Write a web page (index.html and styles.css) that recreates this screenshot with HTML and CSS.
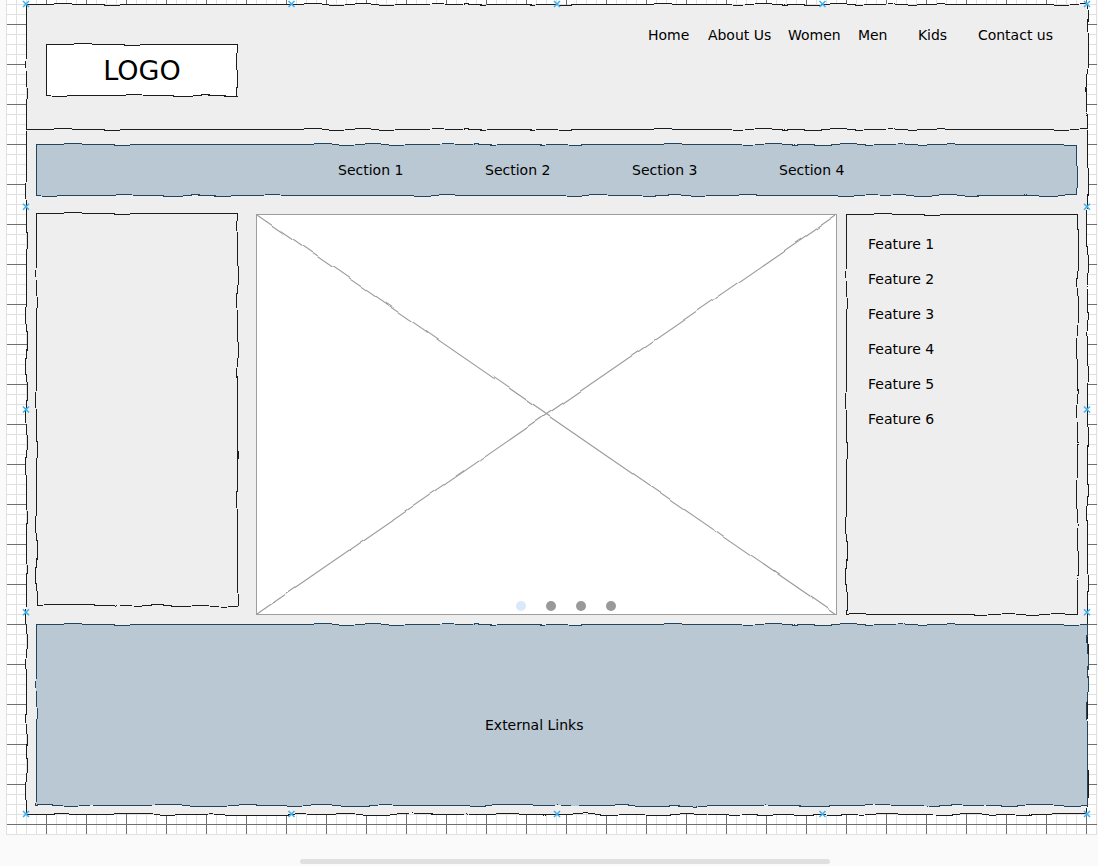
FILE: index.html
```html
<!DOCTYPE html>
<html>
<head>
<meta charset="utf-8">
<title>Wireframe</title>
<link rel="stylesheet" href="styles.css">
</head>
<body>
<svg class="defs" aria-hidden="true">
  <filter id="rough" x="-20%" y="-20%" width="140%" height="140%">
    <feTurbulence type="fractalNoise" baseFrequency="0.04" numOctaves="1" seed="7" result="noise"/>
    <feDisplacementMap in="SourceGraphic" in2="noise" scale="6" xChannelSelector="R" yChannelSelector="G" result="moved"/>
    <feGaussianBlur in="moved" stdDeviation="0.35"/>
  </filter>
  <filter id="rough-soft" x="-5%" y="-5%" width="110%" height="110%">
    <feTurbulence type="fractalNoise" baseFrequency="0.03" numOctaves="1" seed="3" result="noise"/>
    <feDisplacementMap in="SourceGraphic" in2="noise" scale="5" xChannelSelector="R" yChannelSelector="G" result="moved"/>
    <feGaussianBlur in="moved" stdDeviation="0.3"/>
  </filter>
</svg>
<div class="canvas">
  <div class="frame rough">
    <div class="header">
      <div class="logo rough">LOGO</div>
      <nav class="nav">
        <span class="nav-item w60">Home</span>
        <span class="nav-item w80">About Us</span>
        <span class="nav-item w70">Women</span>
        <span class="nav-item w60">Men</span>
        <span class="nav-item w60">Kids</span>
        <span class="nav-item">Contact us</span>
      </nav>
    </div>
    <div class="sections rough">
      <span class="section">Section 1</span>
      <span class="section">Section 2</span>
      <span class="section">Section 3</span>
      <span class="section">Section 4</span>
    </div>
    <div class="middle">
      <div class="sidebar rough"></div>
      <div class="image">
        <svg class="cross" viewBox="0 0 580 400" preserveAspectRatio="none">
          <path d="M0,0 L580,400" />
          <path d="M0,400 L580,0" />
        </svg>
        <div class="dots">
          <span class="dot active"></span>
          <span class="dot"></span>
          <span class="dot"></span>
          <span class="dot"></span>
        </div>
      </div>
      <div class="features rough">
        <div class="feature">Feature 1</div>
        <div class="feature">Feature 2</div>
        <div class="feature">Feature 3</div>
        <div class="feature">Feature 4</div>
        <div class="feature">Feature 5</div>
        <div class="feature">Feature 6</div>
      </div>
    </div>
    <div class="footer rough">External Links</div>
    <svg class="marks" aria-hidden="true">
      <svg x="0" y="0" overflow="visible"><path d="M-3,-3L3,3M-3,3L3,-3"/></svg>
      <svg x="25%" y="0" overflow="visible"><path d="M-3,-3L3,3M-3,3L3,-3"/></svg>
      <svg x="50%" y="0" overflow="visible"><path d="M-3,-3L3,3M-3,3L3,-3"/></svg>
      <svg x="75%" y="0" overflow="visible"><path d="M-3,-3L3,3M-3,3L3,-3"/></svg>
      <svg x="100%" y="0" overflow="visible"><path d="M-4,-3L2,3M-4,3L2,-3"/></svg>
      <svg x="0" y="25%" overflow="visible"><path d="M-3,-3L3,3M-3,3L3,-3"/></svg>
      <svg x="0" y="50%" overflow="visible"><path d="M-3,-3L3,3M-3,3L3,-3"/></svg>
      <svg x="0" y="75%" overflow="visible"><path d="M-3,-3L3,3M-3,3L3,-3"/></svg>
      <svg x="100%" y="25%" overflow="visible"><path d="M-4,-3L2,3M-4,3L2,-3"/></svg>
      <svg x="100%" y="50%" overflow="visible"><path d="M-4,-3L2,3M-4,3L2,-3"/></svg>
      <svg x="100%" y="75%" overflow="visible"><path d="M-4,-3L2,3M-4,3L2,-3"/></svg>
      <svg x="0" y="100%" overflow="visible"><path d="M-3,-4L3,2M-3,2L3,-4"/></svg>
      <svg x="25%" y="100%" overflow="visible"><path d="M-3,-4L3,2M-3,2L3,-4"/></svg>
      <svg x="50%" y="100%" overflow="visible"><path d="M-3,-4L3,2M-3,2L3,-4"/></svg>
      <svg x="75%" y="100%" overflow="visible"><path d="M-3,-4L3,2M-3,2L3,-4"/></svg>
      <svg x="100%" y="100%" overflow="visible"><path d="M-4,-4L2,2M-4,2L2,-4"/></svg>
    </svg>
  </div>
</div>
<div class="scrollbar"></div>
</body>
</html>
```
FILE: styles.css
```css
html, body {
  margin: 0;
  padding: 0;
}
body {
  background: #fafafa;
  font-family: "DejaVu Sans", Verdana, sans-serif;
  font-size: 14px;
  color: #000;
  overflow: hidden;
  width: 1098px;
  height: 866px;
}
.defs {
  position: absolute;
  width: 0;
  height: 0;
}
.canvas {
  margin-left: 6px;
  width: 1091px;
  height: 835px;
  padding-top: 4px;
  box-sizing: border-box;
  border-left: 1px solid #e2e2e2;
  border-bottom: 1px solid #e2e2e2;
  background-color: #ffffff;
  background-image:
    linear-gradient(to right, #6f6f6f 1px, transparent 1px),
    linear-gradient(to bottom, #6f6f6f 1px, transparent 1px),
    linear-gradient(to right, #e0e0e0 1px, transparent 1px),
    linear-gradient(to bottom, #e0e0e0 1px, transparent 1px);
  background-size: 40px 40px, 40px 40px, 10px 10px, 10px 10px;
  background-position: 39px 0, 0 24px, 9px 0, 0 4px;
}

/* sketchy boxes: the fill and outline are drawn by a roughened pseudo-element */
.rough {
  position: relative;
  z-index: 0;
}
.rough::before {
  content: "";
  position: absolute;
  inset: 0;
  z-index: -1;
  box-sizing: border-box;
  border: 1px solid #1e1e1e;
  background: #eeeeee;
  filter: url(#rough);
}

.frame {
  margin-left: 19px;
  width: 1062px;
  height: 811px;
  box-sizing: border-box;
  padding: 1px;
}
.header {
  position: relative;
  display: flex;
  align-items: flex-start;
  height: 125px;
}
.header::after {
  content: "";
  position: absolute;
  left: -1px;
  right: -1px;
  bottom: -1px;
  height: 2px;
  background: linear-gradient(#1e1e1e 50%, #eeeeee 50%);
  filter: url(#rough);
}
.logo {
  margin: 39px 0 0 19px;
  width: 192px;
  height: 52px;
  display: flex;
  align-items: center;
  justify-content: center;
  font-size: 27px;
  line-height: 1;
}
.logo::before {
  background: #ffffff;
}
.nav {
  display: flex;
  margin: 20px 0 0 auto;
  padding-right: 34px;
  line-height: 20px;
}
.w60 { width: 60px; }
.w70 { width: 70px; }
.w80 { width: 80px; }
.sections {
  display: flex;
  align-items: center;
  margin: 14px 0 0 9px;
  width: 1042px;
  height: 52px;
  box-sizing: border-box;
  padding-left: 302px;
}
.sections::before,
.footer::before {
  border-color: #23445d;
  background: #bac8d3;
}
.section {
  width: 147px;
  flex: none;
}
.middle {
  display: flex;
  align-items: flex-start;
  margin: 17px 0 0 9px;
}
.sidebar {
  width: 202px;
  height: 393px;
}
.image {
  position: relative;
  margin: 1px 0 0 18px;
  width: 581px;
  height: 401px;
  box-sizing: border-box;
  border: 1px solid #9e9e9e;
  background: #ffffff;
}
.cross {
  display: block;
  width: 100%;
  height: 100%;
  filter: url(#rough-soft);
}
.cross path {
  fill: none;
  stroke: #9a9a9a;
  stroke-width: 1.1;
  vector-effect: non-scaling-stroke;
}
.dots {
  position: absolute;
  left: 259px;
  top: 386px;
  display: flex;
  gap: 20px;
}
.dot {
  width: 10px;
  height: 10px;
  border-radius: 50%;
  background: #999999;
}
.dot.active {
  background: #dae8fc;
}
.features {
  margin: 1px 0 0 9px;
  width: 232px;
  height: 401px;
  box-sizing: border-box;
  padding: 13px 0 0 22px;
}
.feature {
  line-height: 35px;
}
.footer {
  margin: 9px 0 0 9px;
  width: 1052px;
  height: 182px;
  box-sizing: border-box;
  padding: 91px 0 0 449px;
  line-height: 20px;
}
.marks {
  position: absolute;
  left: 0;
  top: 0;
  width: 1062px;
  height: 811px;
  overflow: visible;
  pointer-events: none;
}
.marks path {
  fill: none;
  stroke: #3fb0f0;
  stroke-width: 1.5;
}
.scrollbar {
  margin: 24px 0 0 300px;
  width: 530px;
  height: 5px;
  border-radius: 3px;
  background: #e0e0e0;
}
```
